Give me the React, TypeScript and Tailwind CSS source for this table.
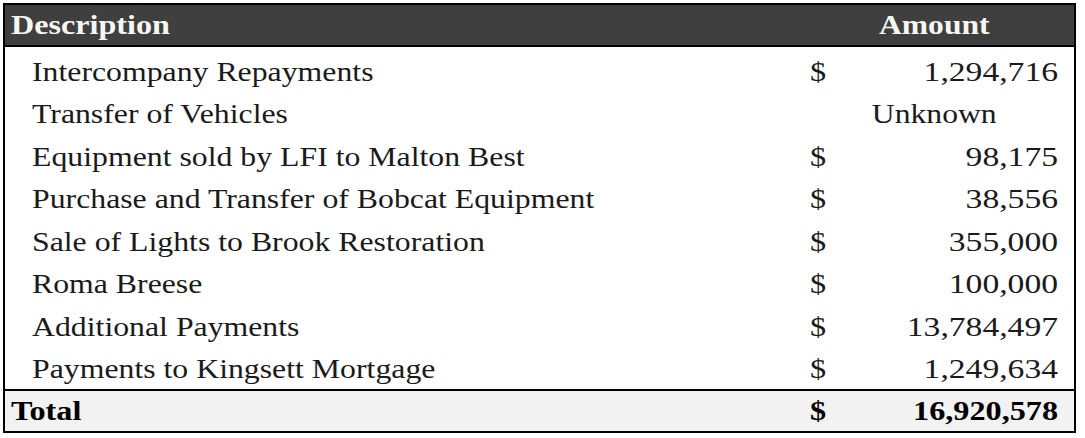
import React from 'react';

const rows: { label: string; amount: string; dollar?: boolean }[] = [
    { label: 'Intercompany Repayments', amount: '1,294,716', dollar: true },
    { label: 'Transfer of Vehicles', amount: 'Unknown' },
    { label: 'Equipment sold by LFI to Malton Best', amount: '98,175', dollar: true },
    { label: 'Purchase and Transfer of Bobcat Equipment', amount: '38,556', dollar: true },
    { label: 'Sale of Lights to Brook Restoration', amount: '355,000', dollar: true },
    { label: 'Roma Breese', amount: '100,000', dollar: true },
    { label: 'Additional Payments', amount: '13,784,497', dollar: true },
    { label: 'Payments to Kingsett Mortgage', amount: '1,249,634', dollar: true },
];

export default function App() {
    return (
        <div className="w-[1085px] h-[438px] bg-white pt-[3px] pl-[3px]" style={{ fontFamily: '"Liberation Serif", "Times New Roman", serif' }}>
            <div className="w-[1073px] border-2 border-black text-[#1a1a1a]">
                {/* Header */}
                <div className="flex h-[42px] items-center bg-[#3f3f3f] border-b-2 border-black text-[#f7f7f2] font-bold text-[27px]">
                    <div className="flex-1 pl-[6px]">
                        <span className="inline-block origin-left scale-x-[1.19]">Description</span>
                    </div>
                    <div className="w-[280px] text-center">
                        <span className="inline-block scale-x-[1.17]">Amount</span>
                    </div>
                </div>

                {/* Body */}
                <div className="pt-[2px]">
                    {rows.map((row) => (
                        <div key={row.label} className="flex h-[42.5px] items-center pt-[3px] text-[28px]">
                            <div className="flex-1 pl-[27px]">
                                <span className="inline-block origin-left scale-x-[1.135]">{row.label}</span>
                            </div>
                            {row.dollar ? (
                                <>
                                    <div className="w-[60px] pl-[16px]">
                                        <span className="inline-block origin-left scale-x-[1.15]">$</span>
                                    </div>
                                    <div className="w-[220px] text-right pr-[16px]">
                                        <span className="inline-block origin-right scale-x-[1.2]">{row.amount}</span>
                                    </div>
                                </>
                            ) : (
                                <div className="w-[280px] text-center">
                                    <span className="inline-block scale-x-[1.13]">{row.amount}</span>
                                </div>
                            )}
                        </div>
                    ))}
                </div>

                {/* Total */}
                <div className="flex h-[42px] items-center bg-[#f2f2f2] border-t-2 border-black font-bold text-[28px] text-black">
                    <div className="flex-1 pl-[6px]">
                        <span className="inline-block origin-left scale-x-[1.15]">Total</span>
                    </div>
                    <div className="w-[60px] pl-[16px]">
                        <span className="inline-block origin-left scale-x-[1.15]">$</span>
                    </div>
                    <div className="w-[220px] text-right pr-[16px]">
                        <span className="inline-block origin-right scale-x-[1.15]">16,920,578</span>
                    </div>
                </div>
            </div>
        </div>
    );
}
